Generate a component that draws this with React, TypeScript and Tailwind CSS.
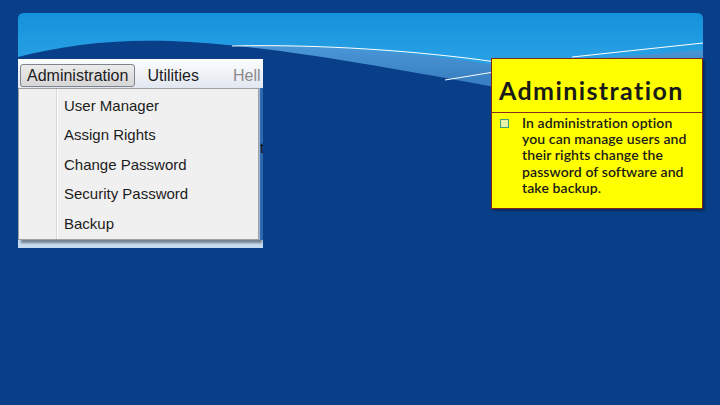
import React from 'react';

const menuItems = ['User Manager', 'Assign Rights', 'Change Password', 'Security Password', 'Backup'];

// Decorative slide header: sky gradient with the dark wave sweeping over it
const HeaderWave = () => (
  <svg className="absolute inset-0" width="720" height="405" viewBox="0 0 720 405">
    <defs>
      <linearGradient id="sky" x1="0" y1="0" x2="0" y2="1">
        <stop offset="0" stopColor="#1592dc" />
        <stop offset="1" stopColor="#3fb0ee" />
      </linearGradient>
      <linearGradient id="band" x1="0" y1="0" x2="0" y2="1">
        <stop offset="0" stopColor="#4b97d6" />
        <stop offset="1" stopColor="#2a6cb4" />
      </linearGradient>
      <clipPath id="panel">
        <path d="M18 19 Q18 13 24 13 L697 13 Q703 13 703 19 L703 110 L18 110 Z" />
      </clipPath>
    </defs>
    <g clipPath="url(#panel)">
      <rect x="18" y="13" width="685" height="100" fill="url(#sky)" />
      <path d="M210 46 C 320 44 420 52 500 66 L 600 58 L 703 50 L 703 110 L 210 110 Z" fill="url(#band)" />
      <path d="M18 57 C 60 46 110 39 170 41 C 260 44 380 66 500 88 L 703 100 L 703 110 L 18 110 Z" fill="#083f88" />
      <path d="M232 46 C 320 44 420 51 496 62" stroke="#ffffff" strokeWidth="1" fill="none" />
      <path d="M572 57 L 703 43" stroke="#ffffff" strokeWidth="1" fill="none" />
      <path d="M445 80 L 494 72" stroke="#ffffff" strokeWidth="1" fill="none" />
    </g>
  </svg>
);

const MenuShot = () => (
  <div className="w-[245px] h-[189px] flex flex-col overflow-hidden font-['Liberation_Sans',Arial,sans-serif] text-[#1c1c1c]">
    <div className="h-[29px] flex items-end gap-[12px] pl-[2px] pb-[1px] border-t border-[#ffffff] bg-gradient-to-b from-[#fbfcfe] to-[#e2e7f0] whitespace-nowrap">
      <div className="h-[23px] flex items-center px-[6px] border border-[#80848c] rounded-[3px] bg-gradient-to-b from-[#ebebeb] to-[#d6d6d6] text-[16px]">
        Administration
      </div>
      <div className="h-[23px] flex items-center text-[16px]">Utilities</div>
      <div className="h-[23px] flex items-center pl-[22px] text-[16px] text-[#8a8a8a]">Hell</div>
    </div>
    <div className="flex-1 flex flex-col bg-[#c6daf0]">
      <div className="flex">
        <div className="w-[241px] h-[152px] flex border border-[#a0a0a0] bg-[#f0f0f0] shadow-[3px_3px_2px_rgba(0,0,0,0.4)]">
          <div className="w-[38px] border-r border-[#d5d5d5]" />
          <div className="w-px bg-[#ffffff]" />
          <div className="flex flex-col pt-[2px] pl-[6px] text-[15px]">
            {menuItems.map(item => (
              <div key={item} className="h-[29.5px] flex items-center">
                {item}
              </div>
            ))}
          </div>
        </div>
        <div className="flex-1 h-[152px] flex flex-col bg-[#2f68ad] border-l border-[#9ab8de] overflow-hidden">
          <div className="mt-[52px] text-[15px] leading-none text-[#111]">t</div>
        </div>
      </div>
    </div>
  </div>
);

const InfoBox = () => (
  <div className="w-[212px] h-[151px] bg-[#ffff00] border border-[#7d2a1c] shadow-[2px_2px_2px_rgba(0,0,0,0.35)] font-['Lato','Open_Sans',sans-serif] text-[#1a1a1a]">
    <div className="h-[54px] flex items-end pb-[9px] pl-[7px] border-b border-[#8a2d1f]">
      <h1 className="text-[25px] font-bold tracking-[1.4px] leading-none">Administration</h1>
    </div>
    <div className="flex gap-[13px] pl-[8px] pr-[10px] pt-[2px]">
      <div className="mt-[4px] w-[9px] h-[9px] shrink-0 border border-[#3f9f78] bg-[#e6f3a8]" />
      <p className="text-[14px] leading-[16.2px] font-semibold tracking-[0.1px]">
        In administration option you can manage users and their rights change the password of software and take backup.
      </p>
    </div>
  </div>
);

export default function App() {
  return (
    <div className="relative w-[720px] h-[405px] overflow-hidden bg-[#083f88]">
      <HeaderWave />
      <div className="relative flex justify-between items-start pt-[58px] pl-[18px] pr-[17px]">
        <div className="mt-[1px]">
          <MenuShot />
        </div>
        <InfoBox />
      </div>
    </div>
  );
}
